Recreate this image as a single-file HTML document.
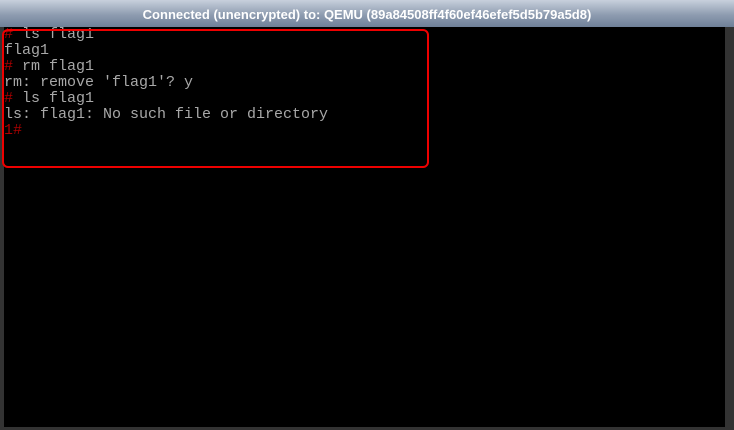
<!DOCTYPE html>
<html><head><meta charset="utf-8"><style>
html,body{margin:0;padding:0;width:734px;height:430px;overflow:hidden;background:#333;}
.title{position:absolute;left:0;top:0;width:734px;height:27px;background:linear-gradient(#c8d0dc,#8e9cb0 55%,#6f8098);color:#fff;font:bold 13px "Liberation Sans",sans-serif;text-align:center;line-height:30px;}
.screen{position:absolute;left:4px;top:27px;width:721px;height:400px;background:#000;}
pre{position:absolute;left:4px;top:27px;margin:0;font:15px/16px "Liberation Mono",monospace;color:#a8a8a8;}
.r{color:#a80000;}
.box{position:absolute;left:2px;top:29px;width:423px;height:135px;border:2px solid #e00;border-radius:6px;}
</style></head><body>
<div class="title">Connected (unencrypted) to: QEMU (89a84508ff4f60ef46efef5d5b79a5d8)</div>
<div class="screen"></div>
<pre><span class="r">#</span> ls flag1
flag1
<span class="r">#</span> rm flag1
rm: remove 'flag1'? y
<span class="r">#</span> ls flag1
ls: flag1: No such file or directory
<span class="r">1#</span></pre>
<div class="box"></div>
</body></html>
